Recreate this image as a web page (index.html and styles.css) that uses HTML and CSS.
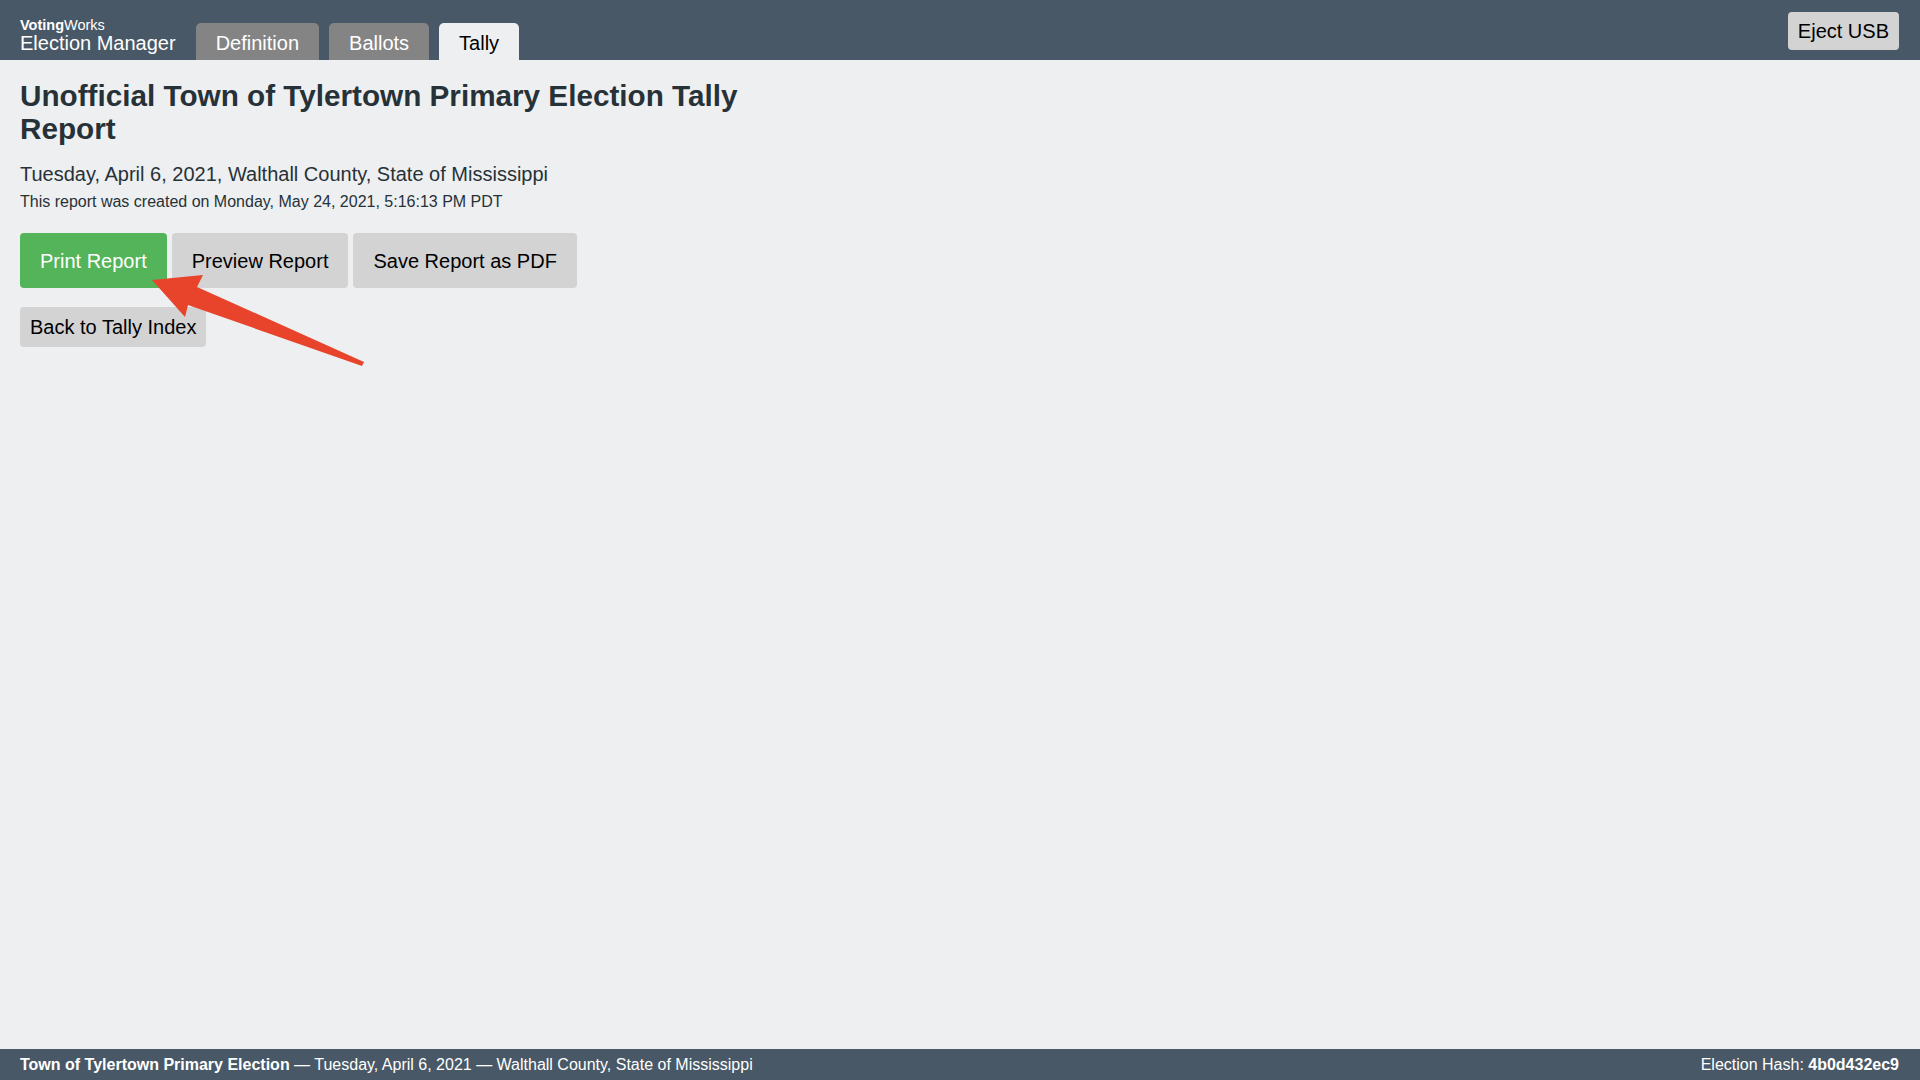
FILE: index.html
```html
<!DOCTYPE html>
<html lang="en">
<head>
<meta charset="utf-8">
<title>Election Manager</title>
<link rel="stylesheet" href="styles.css">
</head>
<body>
<div class="app">
  <header class="topbar">
    <div class="brand">
      <div class="brand-small"><strong>Voting</strong>Works</div>
      <div class="brand-name">Election Manager</div>
    </div>
    <nav class="tabs">
      <span class="tab">Definition</span>
      <span class="tab">Ballots</span>
      <span class="tab active">Tally</span>
    </nav>
    <div class="spacer"></div>
    <button class="btn eject">Eject USB</button>
  </header>
  <main class="main">
    <h1 class="title">Unofficial Town of Tylertown Primary Election Tally Report</h1>
    <p class="subtitle">Tuesday, April 6, 2021, Walthall County, State of Mississippi</p>
    <p class="created">This report was created on Monday, May 24, 2021, 5:16:13 PM PDT</p>
    <div class="actions">
      <button class="btn big primary">Print Report</button>
      <button class="btn big">Preview Report</button>
      <button class="btn big">Save Report as PDF</button>
    </div>
    <div class="back-row">
      <button class="btn back">Back to Tally Index</button>
    </div>
    <svg class="arrow" width="230" height="110" viewBox="0 0 230 110" xmlns="http://www.w3.org/2000/svg">
      <polygon points="2,18 53,13 47,25 214,100 212,104 38,43 35,55" fill="#e8432b"/>
    </svg>
  </main>
  <footer class="footer">
    <div><strong>Town of Tylertown Primary Election</strong> — Tuesday, April 6, 2021 — Walthall County, State of Mississippi</div>
    <div>Election Hash: <strong>4b0d432ec9</strong></div>
  </footer>
</div>
</body>
</html>
```

FILE: styles.css
```css
* { box-sizing: border-box; }
html, body {
  margin: 0;
  padding: 0;
  height: 100%;
}
body {
  font-family: "Liberation Sans", Arial, Helvetica, sans-serif;
  background: #eeeff1;
  color: #263238;
}
.app {
  display: flex;
  flex-direction: column;
  height: 100vh;
}
.topbar {
  height: 60px;
  background: #485866;
  display: flex;
  align-items: flex-end;
  padding: 0 21px 0 20px;
  flex: none;
}
.brand {
  color: #fff;
  padding-bottom: 6px;
  margin-right: 20px;
}
.brand-small {
  font-size: 14.5px;
  line-height: 14px;
}
.brand-small strong { font-weight: 700; }
.brand-name {
  font-size: 20px;
  line-height: 22px;
}
.tabs {
  display: flex;
  gap: 10px;
}
.tab {
  display: block;
  height: 37px;
  padding: 8px 20px 0;
  font-size: 20px;
  line-height: 24px;
  color: #fff;
  background: #848484;
  border-radius: 5px 5px 0 0;
}
.tab.active {
  background: #eeeff1;
  color: #000;
}
.spacer { flex: 1; }
.btn {
  font-family: inherit;
  font-size: 20px;
  line-height: 24px;
  padding: 7px 10px;
  border: none;
  border-radius: 4px;
  background: #d3d3d3;
  color: #000;
  cursor: pointer;
}
.eject {
  align-self: center;
  margin-top: 2px;
}
.main {
  flex: 1;
  padding: 19px 20px 16px;
  position: relative;
}
.title {
  font-size: 29.7px;
  line-height: 33px;
  font-weight: 700;
  margin: 0 0 17px;
  max-width: 790px;
}
.subtitle {
  font-size: 20px;
  line-height: 24px;
  margin: 0 0 6px;
}
.created {
  font-size: 16px;
  line-height: 20px;
  margin: 0 0 21px;
}
.actions {
  display: flex;
  gap: 5px;
  margin-bottom: 19px;
}
.btn.big {
  padding: 15.5px 20px;
}
.btn.primary {
  background: #53b45a;
  color: #fff;
}
.btn.back {
  padding: 8px 10px;
}
.back-row { display: flex; }
.arrow {
  position: absolute;
  left: 150px;
  top: 202px;
}
.footer {
  flex: none;
  height: 31px;
  background: #485866;
  color: #fff;
  font-size: 16px;
  display: flex;
  align-items: center;
  justify-content: space-between;
  padding: 0 21px 0 20px;
}
.footer strong { font-weight: 700; }
```
